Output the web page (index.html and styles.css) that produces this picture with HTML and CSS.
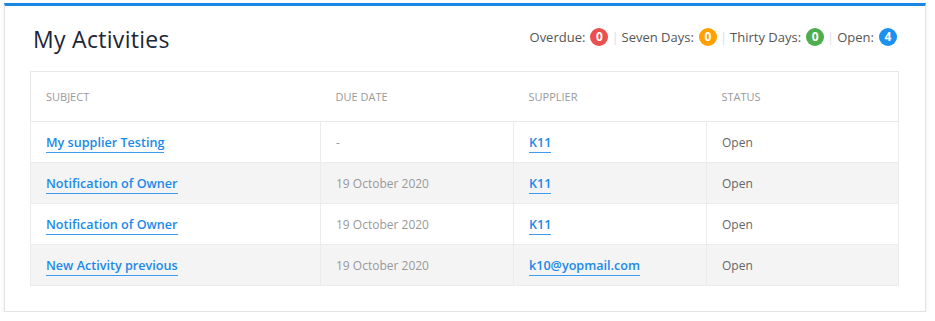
FILE: index.html
```html
<!DOCTYPE html>
<html>
<head>
<meta charset="utf-8">
<link rel="stylesheet" href="styles.css">
</head>
<body>
<div class="wrap">
  <section class="card">
    <header class="card-head">
      <h1 class="title">My Activities</h1>
      <div class="stats">
        <span class="stat">Overdue: <span class="badge red">0</span></span>
        <span class="sep">|</span>
        <span class="stat">Seven Days: <span class="badge orange">0</span></span>
        <span class="sep">|</span>
        <span class="stat">Thirty Days: <span class="badge green">0</span></span>
        <span class="sep">|</span>
        <span class="stat">Open: <span class="badge blue">4</span></span>
      </div>
    </header>
    <table class="grid">
      <colgroup>
        <col class="c1"><col class="c2"><col class="c3"><col class="c4">
      </colgroup>
      <thead>
        <tr><th>Subject</th><th>Due Date</th><th>Supplier</th><th>Status</th></tr>
      </thead>
      <tbody>
        <tr>
          <td><a class="link" href="#">My supplier Testing</a></td>
          <td class="date">-</td>
          <td><a class="link" href="#">K11</a></td>
          <td class="status">Open</td>
        </tr>
        <tr class="alt">
          <td><a class="link" href="#">Notification of Owner</a></td>
          <td class="date">19 October 2020</td>
          <td><a class="link" href="#">K11</a></td>
          <td class="status">Open</td>
        </tr>
        <tr>
          <td><a class="link" href="#">Notification of Owner</a></td>
          <td class="date">19 October 2020</td>
          <td><a class="link" href="#">K11</a></td>
          <td class="status">Open</td>
        </tr>
        <tr class="alt">
          <td><a class="link" href="#">New Activity previous</a></td>
          <td class="date">19 October 2020</td>
          <td><a class="link" href="#">k10@yopmail.com</a></td>
          <td class="status">Open</td>
        </tr>
      </tbody>
    </table>
  </section>
</div>
</body>
</html>
```
FILE: styles.css
```css
html, body {
  margin: 0;
  padding: 0;
  background: #ffffff;
  font-family: "Open Sans", "Noto Sans", sans-serif;
}
.wrap {
  padding: 3px 0 0 4px;
}
.card {
  box-sizing: border-box;
  width: 922px;
  height: 309px;
  background: #fff;
  border: 1px solid #e2e2e2;
  border-top: 3px solid #1a86e4;
  box-shadow: 0 1px 4px rgba(0, 0, 0, 0.08);
  padding: 0 27px 0 25px;
}
.card-head {
  height: 65px;
  display: flex;
  align-items: center;
  justify-content: space-between;
}
.title {
  margin: 0 0 0 3px;
  padding-top: 1px;
  font-family: "Open Sans", "Noto Sans", sans-serif;
  font-weight: 400;
  font-size: 23px;
  letter-spacing: 0.3px;
  color: #1b2638;
}
.stats {
  display: flex;
  align-items: center;
  gap: 3px;
  font-size: 13px;
  color: #555;
  margin: 0 1px 3px 0;
}
.stat {
  display: inline-flex;
  align-items: center;
  gap: 5px;
}
.sep {
  color: #dcdcec;
}
.badge {
  display: inline-flex;
  align-items: center;
  justify-content: center;
  width: 18px;
  height: 18px;
  border-radius: 50%;
  color: #fff;
  font-weight: 700;
  font-size: 12px;
  line-height: 1;
}
.red { background: #eb4f4f; }
.orange { background: #ffa000; }
.green { background: #4cae4c; }
.blue { background: #1e90f0; }
.grid {
  width: 868px;
  border-collapse: collapse;
  table-layout: fixed;
  border: 1px solid #e8e8e8;
}
.c1 { width: 290px; }
.c2 { width: 193px; }
.c3 { width: 193px; }
.c4 { width: 192px; }
.grid th {
  height: 49px;
  padding: 0 0 0 15px;
  text-align: left;
  font-weight: 400;
  font-size: 11px;
  color: #9a9a9a;
  text-transform: uppercase;
  border-bottom: 1px solid #e8e8e8;
}
.grid td {
  height: 40px;
  padding: 0 0 0 15px;
  border: 1px solid #ececec;
  font-size: 12px;
  vertical-align: middle;
}
.grid tr.alt td {
  background: #f4f4f4;
}
.link {
  color: #1b8ae8;
  font-weight: 600;
  font-size: 12.6px;
  text-decoration: none;
  border-bottom: 1px solid #3d9cf0;
  padding-bottom: 1px;
}
.date {
  color: #999;
}
.status {
  color: #666;
}
```
